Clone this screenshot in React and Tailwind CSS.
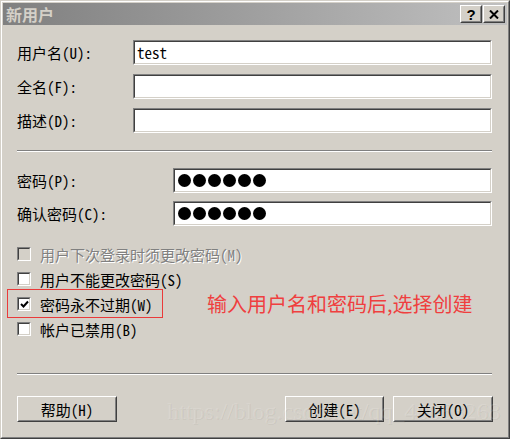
import React from 'react';

const FONT = { fontFamily: '"Noto Sans Mono CJK SC", "Noto Sans CJK SC", "DejaVu Sans Mono", monospace' };

// sunken 3d edit box, classic win2k style
const Sunken = ({ className = '', children }) => (
  <div className={`border border-t-[#808080] border-l-[#808080] border-b-white border-r-white ${className}`}>
    <div className="h-full border border-t-[#404040] border-l-[#404040] border-b-[#d4d0c8] border-r-[#d4d0c8] bg-white flex items-center">
      {children}
    </div>
  </div>
);

const Raised = ({ className = '', children }) => (
  <div className={`border border-t-white border-l-white border-b-[#404040] border-r-[#404040] bg-[#d4d0c8] ${className}`}>
    <div className="h-full border border-t-[#d4d0c8] border-l-[#d4d0c8] border-b-[#808080] border-r-[#808080] flex items-center justify-center">
      {children}
    </div>
  </div>
);

const Separator = () => (
  <div className="ml-[14px] mr-[15px]">
    <div className="h-px bg-[#808080]" />
    <div className="h-px bg-white" />
  </div>
);

const Checkbox = ({ checked, disabled }) => (
  <div className="w-[14px] h-[14px] border border-t-[#808080] border-l-[#808080] border-b-white border-r-white shrink-0">
    <div
      className={`w-full h-full border border-t-[#404040] border-l-[#404040] border-b-[#d4d0c8] border-r-[#d4d0c8] flex items-center justify-center ${
        disabled ? 'bg-[#d4d0c8]' : 'bg-white'
      }`}
    >
      {checked && (
        <svg width="9" height="9" viewBox="0 0 9 9">
          <polyline points="1,4 3.5,6.5 8,1.5" fill="none" stroke="#000" strokeWidth="2" />
        </svg>
      )}
    </div>
  </div>
);

const Field = ({ label, labelWidth, children }) => (
  <div className="flex items-center h-[25px] ml-[14px] mr-[15px]">
    <div className="shrink-0 text-[15px] text-black leading-none" style={{ width: labelWidth }}>
      {label}
    </div>
    <Sunken className="flex-1 h-[25px]">{children}</Sunken>
  </div>
);

const Dots = () => (
  <div className="flex gap-[2px] ml-[3px]">
    {[0, 1, 2, 3, 4, 5].map((i) => (
      <div key={i} className="w-[13px] h-[13px] rounded-full bg-black" />
    ))}
  </div>
);

const CheckRow = ({ label, checked, disabled, children }) => (
  <div className="flex items-center h-[14px] ml-[14px]">
    <Checkbox checked={checked} disabled={disabled} />
    <span
      className={`ml-[9px] text-[15px] leading-none whitespace-nowrap ${
        disabled ? 'text-[#808080] [text-shadow:1px_1px_0_#fff]' : 'text-black'
      }`}
    >
      {label}
    </span>
    {children}
  </div>
);

export default function App() {
  return (
    <div className="w-[510px] h-[439px] overflow-hidden" style={FONT}>
      <div className="relative w-full h-full border border-t-[#d4d0c8] border-l-[#d4d0c8] border-b-[#404040] border-r-[#404040]">
        <div className="w-full h-full border border-t-white border-l-white border-b-[#808080] border-r-[#808080] bg-[#d4d0c8] p-px">
          {/* Title bar (inactive) */}
          <div className="h-[22px] flex items-center bg-gradient-to-r from-[#808080] to-[#c0c0c0] pl-[3px] pr-[2px]">
            <span className="text-[16px] font-bold text-[#d4d0c8] leading-none">新用户</span>
            <div className="ml-auto flex gap-[1px]">
              <Raised className="w-[22px] h-[18px]">
                <span className="text-[15px] font-bold leading-none text-black" style={{ fontFamily: '"Liberation Sans", sans-serif' }}>?</span>
              </Raised>
              <Raised className="w-[22px] h-[18px]">
                <svg width="10" height="9" viewBox="0 0 10 9">
                  <path d="M1 0.5 L9 8.5 M9 0.5 L1 8.5" stroke="#000" strokeWidth="2" />
                </svg>
              </Raised>
            </div>
          </div>

          <div className="mt-[15px] flex flex-col gap-[9px]">
            <Field label="用户名(U):" labelWidth={116}>
              <span className="ml-[2px] text-[15px] leading-none text-black">test</span>
            </Field>
            <Field label="全名(F):" labelWidth={116} />
            <Field label="描述(D):" labelWidth={116} />
          </div>

          <div className="mt-[17px]">
            <Separator />
          </div>

          <div className="mt-[16px] flex flex-col gap-[8px]">
            <Field label="密码(P):" labelWidth={156}>
              <Dots />
            </Field>
            <Field label="确认密码(C):" labelWidth={156}>
              <Dots />
            </Field>
          </div>

          <div className="mt-[21px] flex flex-col gap-[11px]">
            <CheckRow label="用户下次登录时须更改密码(M)" disabled />
            <CheckRow label="用户不能更改密码(S)" />
            <div className="relative">
              <CheckRow label="密码永不过期(W)" checked>
                <span className="absolute left-[204px] text-[20px] leading-none text-[#ef3f3f] whitespace-nowrap" style={{ fontFamily: '"Noto Sans CJK SC", sans-serif' }}>
                  输入用户名和密码后,选择创建
                </span>
              </CheckRow>
              {/* red annotation frame */}
              <div className="absolute left-[4px] top-[-8px] w-[156px] h-[29px] border border-[#ea3a3a]" />
            </div>
            <CheckRow label="帐户已禁用(B)" />
          </div>

          <div className="mt-[37px]">
            <Separator />
          </div>

          <div className="mt-[21px] flex items-center ml-[14px] mr-[14px]">
            <Raised className="w-[100px] h-[26px]">
              <span className="text-[15px] leading-none text-black">帮助(H)</span>
            </Raised>
            <div className="ml-auto flex gap-[9px]">
              <Raised className="w-[99px] h-[26px]">
                <span className="text-[15px] leading-none text-black">创建(E)</span>
              </Raised>
              <Raised className="w-[100px] h-[26px]">
                <span className="text-[15px] leading-none text-black">关闭(O)</span>
              </Raised>
            </div>
          </div>
        </div>

        {/* csdn watermark */}
        <div
          className="absolute left-[166px] top-[398px] text-[24px] leading-none whitespace-nowrap text-white/15 [text-shadow:1px_1px_0_rgba(0,0,0,0.05)] pointer-events-none"
          style={{ fontFamily: '"Liberation Serif", serif' }}
        >
          https://blog.csdn.net/qq_40063268
        </div>
      </div>
    </div>
  );
}
